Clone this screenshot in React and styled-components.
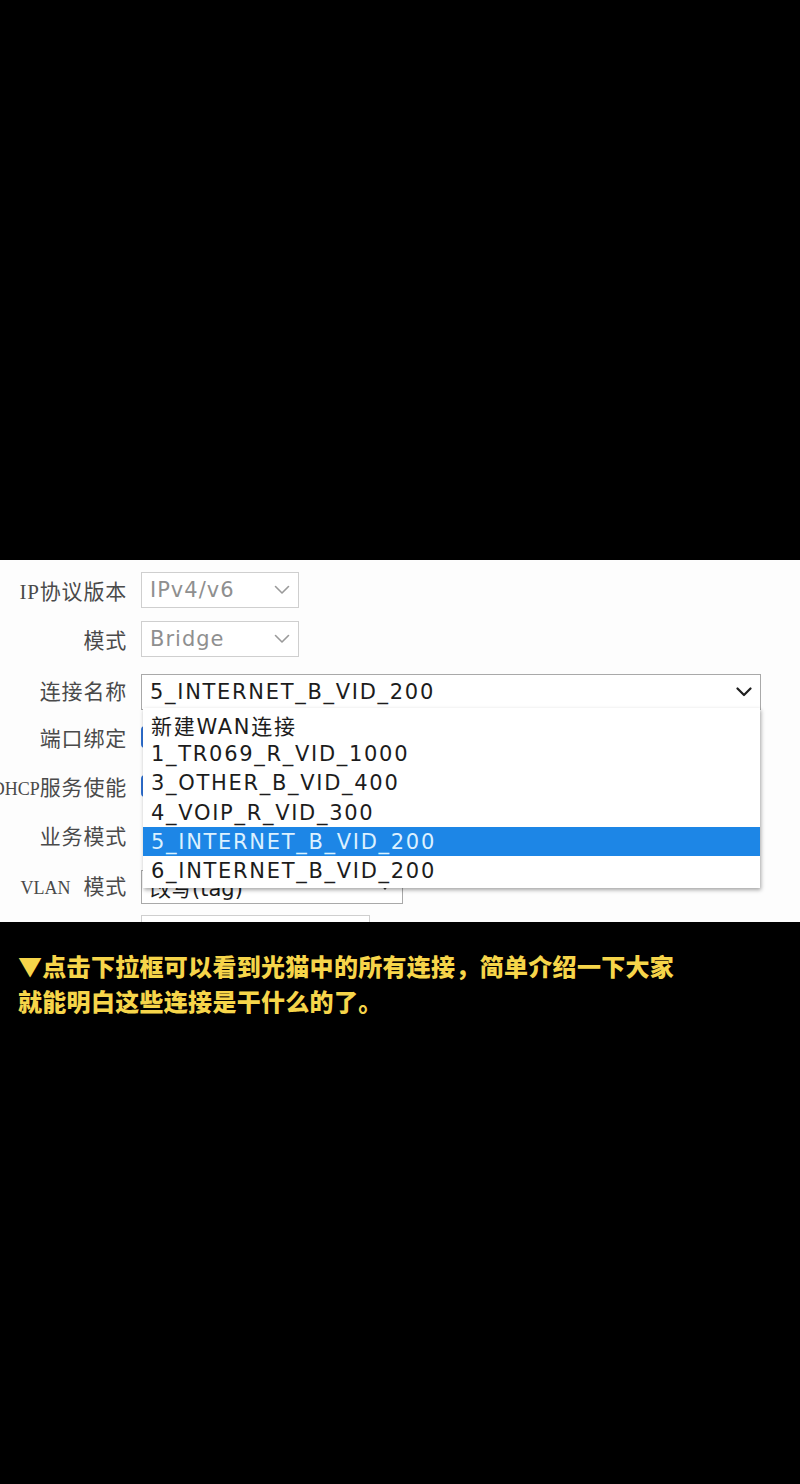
import React from 'react'
import styled, { createGlobalStyle } from 'styled-components'

const Global = createGlobalStyle`
    html, body {
        margin: 0;
        padding: 0;
        background: #000;
    }
`

const Page = styled.div`
    width: 800px;
    height: 1484px;
    background: #000;
    display: flex;
    flex-direction: column;
    overflow: hidden;
`

const TopSpace = styled.div`
    height: 560px;
    flex: none;
`

const Panel = styled.div`
    height: 362px;
    flex: none;
    background: #fdfdfd;
    overflow: hidden;
    padding-top: 12px;
    box-sizing: border-box;
`

const Form = styled.div`
    display: flex;
    flex-direction: column;
    gap: 13px;
`

const Row = styled.div`
    display: grid;
    grid-template-columns: 127px 1fr;
    column-gap: 14px;
    align-items: center;
    height: 36px;
    position: relative;
    z-index: ${p => (p.$front ? 2 : 'auto')};
`

const Label = styled.div`
    display: flex;
    justify-content: flex-end;
    align-items: baseline;
    white-space: nowrap;
    font-family: "Liberation Serif", "Noto Sans CJK SC", serif;
    font-size: 21px;
    color: #4a4a4a;
    letter-spacing: 0.8px;
`

const Latin = styled.span`
    font-size: 18px;
    letter-spacing: 0;
    margin-right: ${p => p.$gap || 0}px;
`

const Field = styled.div`
    position: relative;
    height: 100%;
    display: flex;
    align-items: center;
`

const Select = styled.div`
    box-sizing: border-box;
    width: ${p => p.$w}px;
    height: ${p => p.$h || 36}px;
    margin-top: ${p => p.$shift || 0}px;
    border: 1px solid ${p => (p.$dark ? '#a9a9a9' : '#cfcfcf')};
    background: #fff;
    display: flex;
    align-items: center;
    justify-content: space-between;
    padding: 0 8px 0 8px;
    font-family: "DejaVu Sans", "Noto Sans CJK SC", sans-serif;
    font-size: 21px;
    letter-spacing: ${p => p.$ls ?? (p.$dark ? 1.7 : 1)}px;
    color: ${p => (p.$dark ? '#1c1c1c' : '#8f8f8f')};
    white-space: nowrap;
    align-self: ${p => (p.$top ? 'flex-start' : 'center')};
`

const Chevron = ({ dark }) => (
    <svg width="16" height="10" viewBox="0 0 16 10">
        <polyline
            points="1.5,1.5 8,8 14.5,1.5"
            fill="none"
            stroke={dark ? '#1f1f1f' : '#9a9a9a'}
            strokeWidth={dark ? 2.2 : 1.6}
            strokeLinecap="round"
            strokeLinejoin="round"
        />
    </svg>
)

const Caret = styled.span`
    width: 0;
    height: 0;
    border-left: 5px solid transparent;
    border-right: 5px solid transparent;
    border-top: 6px solid #333;
    margin-right: 4px;
`

const Check = styled.span`
    width: 20px;
    height: 22px;
    border-radius: 4px;
    background: #2d6fd1;
`

const List = styled.div`
    position: absolute;
    top: 38px;
    left: 2px;
    right: 40px;
    background: #fff;
    padding: 2px 0;
    box-shadow: 1px 2px 4px rgba(0, 0, 0, 0.35);
    z-index: 2;
`

const Item = styled.div`
    height: 29.3px;
    display: flex;
    align-items: center;
    padding-left: 8px;
    font-family: "DejaVu Sans", "Noto Sans CJK SC", sans-serif;
    font-size: 21px;
    letter-spacing: 1.7px;
    white-space: nowrap;
    background: ${p => (p.$active ? '#1d86e6' : 'transparent')};
    color: ${p => (p.$active ? '#dcf1ff' : '#1c1c1c')};
`

const Caption = styled.div`
    margin-top: 26px;
    padding-left: 18px;
    font-family: "Noto Sans CJK SC", sans-serif;
    font-weight: 900;
    font-size: 24px;
    line-height: 35px;
    color: #f6d54a;
    letter-spacing: 0.3px;
`

const options = [
    '新建WAN连接',
    '1_TR069_R_VID_1000',
    '3_OTHER_B_VID_400',
    '4_VOIP_R_VID_300',
    '5_INTERNET_B_VID_200',
    '6_INTERNET_B_VID_200',
]

const App = () => {
    return (
        <>
            <Global />
            <Page>
                <TopSpace />
                <Panel>
                    <Form>
                        <Row>
                            <Label>IP协议版本</Label>
                            <Field>
                                <Select $w={158}>IPv4/v6<Chevron /></Select>
                            </Field>
                        </Row>
                        <Row>
                            <Label>模式</Label>
                            <Field>
                                <Select $w={158}>Bridge<Chevron /></Select>
                            </Field>
                        </Row>
                        <Row $front>
                            <Label>连接名称</Label>
                            <Field>
                                <Select $w={620} $dark $shift={4}>5_INTERNET_B_VID_200<Chevron dark /></Select>
                                <List>
                                    {options.map((o, i) => (
                                        <Item key={i} $active={i === 4}>{o}</Item>
                                    ))}
                                </List>
                            </Field>
                        </Row>
                        <Row>
                            <Label>端口绑定</Label>
                            <Field><Check /></Field>
                        </Row>
                        <Row>
                            <Label><Latin>DHCP</Latin><span>服务使能</span></Label>
                            <Field><Check /></Field>
                        </Row>
                        <Row>
                            <Label>业务模式</Label>
                            <Field />
                        </Row>
                        <Row>
                            <Label><Latin $gap={13}>VLAN</Latin><span>模式</span></Label>
                            <Field>
                                <Select $w={262} $h={34} $dark $ls={0} $shift={4}>改写(tag)<Caret /></Select>
                            </Field>
                        </Row>
                        <Row>
                            <Label />
                            <Field>
                                <Select $w={229} $top />
                            </Field>
                        </Row>
                    </Form>
                </Panel>
                <Caption>
                    ▼点击下拉框可以看到光猫中的所有连接，简单介绍一下大家<br />
                    就能明白这些连接是干什么的了。
                </Caption>
            </Page>
        </>
    )
}

export default App
